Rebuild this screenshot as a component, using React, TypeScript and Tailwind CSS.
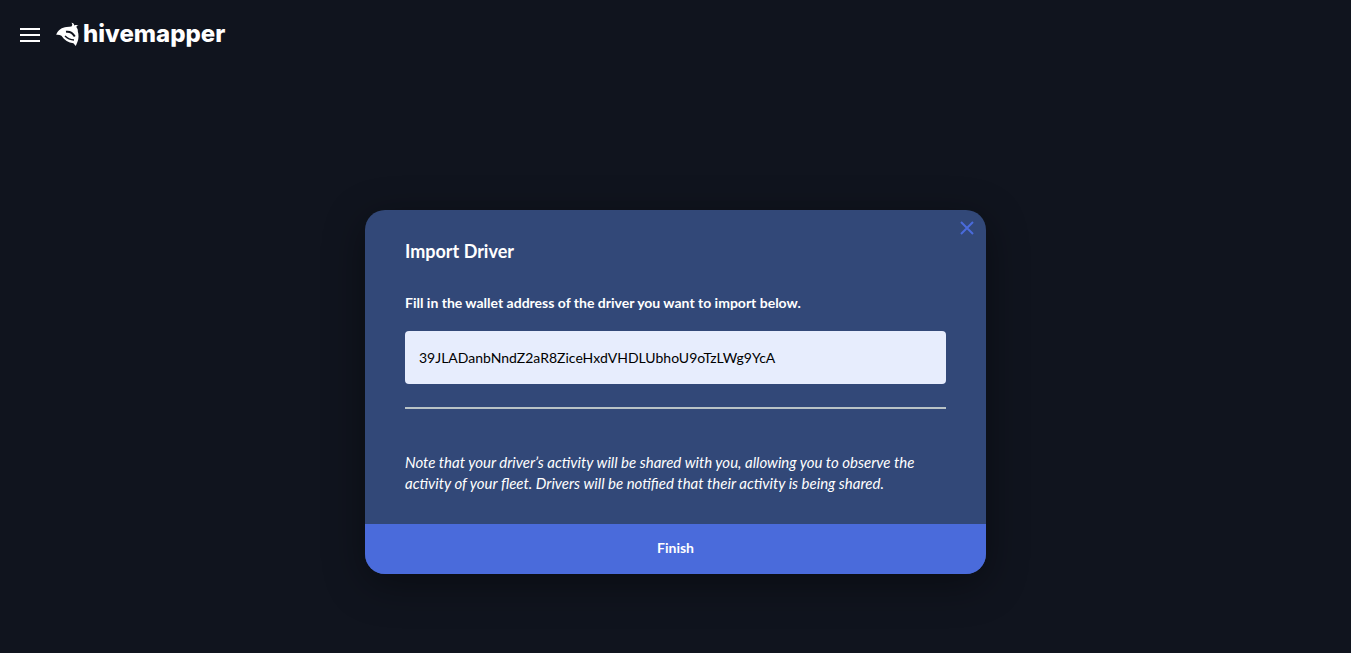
import { useState } from "react";

function BeeMark() {
  return (
    <svg viewBox="0 0 24 26" className="h-[26px] w-6 shrink-0 fill-white" aria-hidden="true">
      <path d="M0.2 12.8 C2 8 6 5.2 10.6 5 C12.6 4.9 14.2 4.6 15.4 4.4 C16.6 3.6 16.6 2 15.4 0.8 C17.2 1 18.2 2 18.3 3.4 C19.8 2.8 21.2 2.9 22.6 3.6 C21 3.8 20.2 4.4 20.6 5.4 C21.6 6.6 22 7.8 21.8 9.2 C22.8 12 22.8 17 21.6 19.6 L19.8 24 L17.4 21.2 C12.4 20.8 8.4 18.4 5.4 13.8 C3.8 12.8 2 12.4 0.2 12.8 Z" />
      <g className="fill-none stroke-[#10141e]">
        <path d="M10 9.8 C13.4 9.2 16.8 11.2 18.8 14.6" className="stroke-2" />
        <path d="M9 14 C11.4 16.4 14.4 17.8 18 18" className="stroke-[1.4]" />
      </g>
    </svg>
  );
}

export default function App() {
  const [address, setAddress] = useState("39JLADanbNndZ2aR8ZiceHxdVHDLUbhoU9oTzLWg9YcA");

  return (
    <div className="flex min-h-screen flex-col bg-[#10141e] font-[Lato,sans-serif] text-white">
      <header className="flex h-[70px] items-center gap-4 px-5">
        <button type="button" aria-label="Menu" className="flex w-5 flex-col gap-1">
          <span className="h-0.5 w-full bg-white" />
          <span className="h-0.5 w-full bg-white" />
          <span className="h-0.5 w-full bg-white" />
        </button>
        <a href="#" className="flex items-center gap-[3px]">
          <BeeMark />
          <span className="pb-0.5 font-[Inter,sans-serif] text-2xl leading-7 font-extrabold">hivemapper</span>
        </a>
      </header>

      <main className="flex flex-1 items-start justify-center px-5 pt-[140px] pb-10">
        <form
          role="dialog"
          aria-labelledby="import-title"
          onSubmit={(e) => e.preventDefault()}
          className="relative w-full max-w-[621px] overflow-hidden rounded-[20px] bg-[#324878] shadow-[0_10px_40px_rgba(0,0,0,0.4)]"
        >
          <button type="button" aria-label="Close" className="absolute top-[11px] right-3">
            <svg viewBox="0 0 14 14" className="size-[14px] fill-none stroke-[#4a6bdb] stroke-2" aria-hidden="true">
              <path d="M1 1 13 13M13 1 1 13" />
            </svg>
          </button>

          <div className="px-10 pt-7 pb-[30px]">
            <h1 id="import-title" className="text-lg leading-[26px] font-bold">
              Import Driver
            </h1>
            <label htmlFor="wallet" className="mt-7 block text-sm leading-[21px] font-bold">
              Fill in the wallet address of the driver you want to import below.
            </label>
            <input
              id="wallet"
              type="text"
              value={address}
              onChange={(e) => setAddress(e.target.value)}
              className="mt-[18px] block h-[53px] w-full rounded-[4px] bg-[#e7edfd] px-[14px] text-sm text-black outline-none"
            />
            <hr className="mt-[23px] border-t-2 border-[#b9c3c6]" />
            <p className="mt-[43px] text-[15px] leading-[21px] italic">
              Note that your driver’s activity will be shared with you, allowing you to observe the activity of your
              fleet. Drivers will be notified that their activity is being shared.
            </p>
          </div>

          <button type="submit" className="block h-[50px] w-full bg-[#4a6bdb] pb-0.5 text-sm font-bold">
            Finish
          </button>
        </form>
      </main>
    </div>
  );
}
